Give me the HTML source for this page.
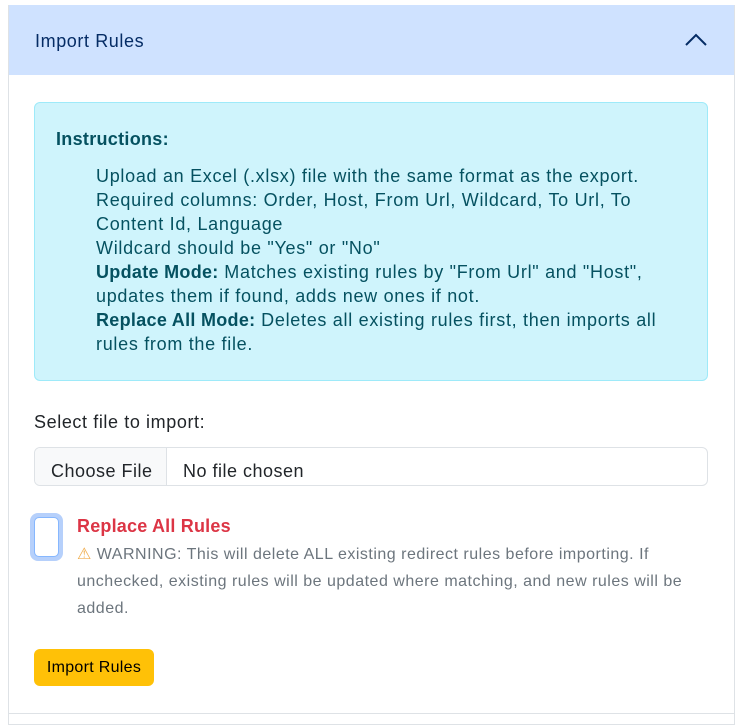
<!DOCTYPE html>
<html><head><style>
*{box-sizing:border-box;margin:0;padding:0}
body{width:737px;height:717px;background:#fff;font-family:"Liberation Sans",sans-serif;color:#212529;position:relative;overflow:hidden}
.card{position:absolute;left:8px;top:5px;width:727px;height:720px;border:1px solid #dee2e6;border-top:none}
.hdr{position:absolute;left:0;top:0;width:100%;height:70px;background:#cfe2ff;color:#052c65;font-size:18px;letter-spacing:0.6px}
.hdr span{position:absolute;left:26px;top:26px}
.alert{position:absolute;left:34px;top:102px;width:674px;height:279px;background:#cff4fc;border:1px solid #9eeaf9;border-radius:6px;color:#055160;font-size:18px;line-height:24px;letter-spacing:0.7px}
.abs{position:absolute}
</style></head><body>
<div class="card">
 <div class="hdr"><span>Import Rules</span>
  <svg class="abs" style="left:676px;top:28px" width="22" height="14" viewBox="0 0 22 14"><path d="M1 12 L11 2 L21 12" fill="none" stroke="#052c65" stroke-width="2"/></svg>
 </div>
</div>
<div class="alert">
 <div class="abs" style="left:21px;top:24px;font-weight:bold;letter-spacing:0.3px">Instructions:</div>
 <div class="abs" style="left:61px;top:61px;width:600px">
  Upload an Excel (.xlsx) file with the same format as the export.<br>
  Required columns: Order, Host, From Url, Wildcard, To Url, To Content Id, Language<br>
  Wildcard should be "Yes" or "No"<br>
  <b style="letter-spacing:0.3px">Update Mode:</b> Matches existing rules by "From Url" and "Host", updates them if found, adds new ones if not.<br>
  <b style="letter-spacing:0.3px">Replace All Mode:</b> Deletes all existing rules first, then imports all rules from the file.
 </div>
</div>
<div class="abs" style="left:34px;top:412px;font-size:18px;letter-spacing:0.6px">Select file to import:</div>
<div class="abs" style="left:34px;top:447px;width:674px;height:39px;border:1px solid #dee2e6;border-radius:6px;overflow:hidden;font-size:18px;letter-spacing:0.5px">
 <div class="abs" style="left:0;top:0;width:132px;height:39px;background:#f8f9fa;border-right:1px solid #dee2e6"></div>
 <div class="abs" style="left:16px;top:13px">Choose File</div>
 <div class="abs" style="left:148px;top:13px">No file chosen</div>
</div>
<div class="abs" style="left:30px;top:513px;width:33px;height:48px;border-radius:8px;background:#b6d0fb"></div>
<div class="abs" style="left:34px;top:517px;width:25px;height:40px;border-radius:5px;background:#fff;border:1px solid #86b7fe"></div>
<div class="abs" style="left:77px;top:516px;font-size:18px;color:#dc3545;font-weight:bold;letter-spacing:0.2px">Replace All Rules</div>
<div class="abs" style="left:77px;top:541px;width:630px;font-size:16px;line-height:27px;color:#6c757d;letter-spacing:0.5px"><span style="color:#f0ad4e">⚠</span> WARNING: This will delete ALL existing redirect rules before importing. If unchecked, existing rules will be updated where matching, and new rules will be added.</div>
<div class="abs" style="left:34px;top:649px;width:120px;height:37px;background:#ffc107;border-radius:6px;font-size:16px;line-height:37px;text-align:center;color:#000;letter-spacing:0.3px">Import Rules</div>
<div class="abs" style="left:8px;top:713px;width:727px;height:1px;background:#dee2e6"></div>
</body></html>
